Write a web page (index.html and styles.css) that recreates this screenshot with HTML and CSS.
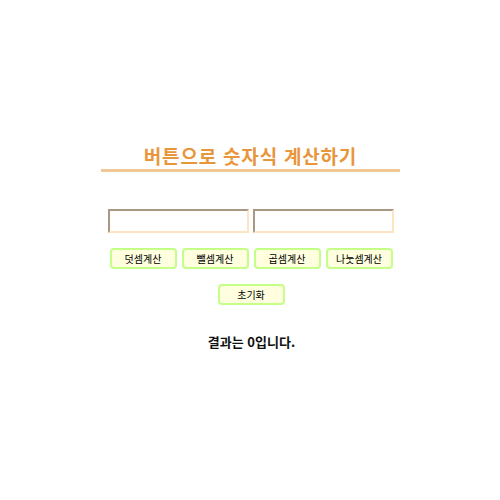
FILE: index.html
```html
<!DOCTYPE html>
<html lang="ko">
<head>
<meta charset="utf-8">
<link rel="stylesheet" href="styles.css">
</head>
<body>
<div class="wrap">
  <h1 class="title">버튼으로 숫자식 계산하기</h1>
  <div class="inputs">
    <input class="num" type="text"><input class="num" type="text">
  </div>
  <div class="ops">
    <button class="btn">덧셈계산</button>
    <button class="btn">뺄셈계산</button>
    <button class="btn">곱셈계산</button>
    <button class="btn">나눗셈계산</button>
  </div>
  <div class="reset">
    <button class="btn">초기화</button>
  </div>
  <p class="result">결과는 0입니다.</p>
</div>
</body>
</html>
```
FILE: styles.css
```css
html, body {
  margin: 0;
  padding: 0;
  background: #ffffff;
}
body {
  font-family: "Noto Sans CJK KR", "Noto Sans", sans-serif;
}
.wrap {
  width: 300px;
  margin: 0 auto;
  padding-top: 144px;
  text-align: center;
}
.title {
  margin: 0 0 0 1px;
  font-size: 19px;
  line-height: 24px;
  font-weight: bold;
  letter-spacing: 0.8px;
  color: #e8963c;
  border-bottom: 3px solid #f0c896;
  padding-bottom: 1px;
}
.inputs {
  margin-top: 37px;
  display: flex;
  justify-content: center;
  gap: 4px;
  padding-left: 2px;
}
.num {
  box-sizing: border-box;
  width: 141px;
  height: 24px;
  margin: 0;
  border-style: solid;
  border-width: 2px;
  border-color: #a89882 #ffe4c4 #ffe4c4 #a89882;
  background: #fff;
}
.ops {
  margin-top: 15px;
  display: flex;
  justify-content: center;
  gap: 5px;
  padding-left: 2px;
}
.btn {
  box-sizing: border-box;
  width: 67px;
  height: 21px;
  margin: 0;
  padding: 0;
  background: #ffffe0;
  border: 2px solid #c4ff88;
  border-radius: 4px;
  font-family: "Noto Sans CJK KR", sans-serif;
  font-size: 10px;
  font-weight: normal;
  color: #000;
}
.reset {
  margin-top: 15px;
  display: flex;
  justify-content: center;
  padding-left: 2px;
}
.result {
  margin: 27px 0 0;
  font-size: 13px;
  font-weight: bold;
  color: #111;
  padding-left: 3px;
}
```
